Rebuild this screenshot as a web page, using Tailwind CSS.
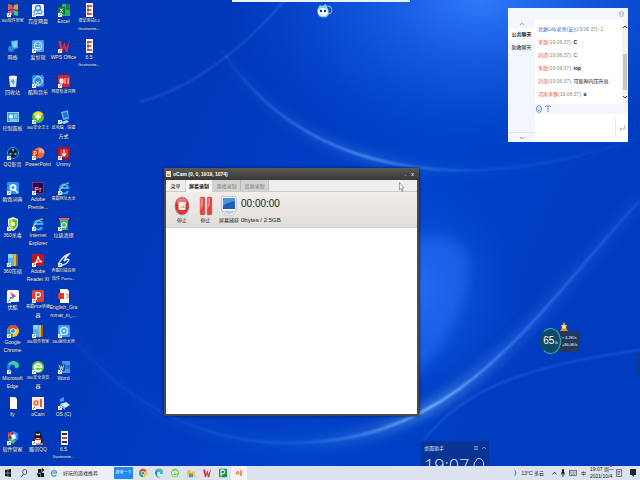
<!DOCTYPE html>
<html lang="en">

<head>
    <meta charset="UTF-8">
    <meta name="viewport" content="width=device-width, initial-scale=1.0">
    <title>Desktop</title>
    <script src="https://cdn.jsdelivr.net/npm/@tailwindcss/browser@4"></script>
</head>

<body onload="loadIcons()" class="h-screen flex flex-col overflow-hidden bg-[#0038b8] font-['Liberation_Sans','Noto_Sans_CJK_SC',sans-serif]">
    <main class="relative flex-1 min-h-0 overflow-hidden">
        <!-- Wallpaper -->
        <svg class="absolute inset-0 w-full h-full" viewBox="0 0 640 466" preserveAspectRatio="none" aria-hidden="true">
            <defs>
                <linearGradient id="base" x1="0" y1="0" x2="1" y2="0.3">
                    <stop offset="0" stop-color="#0038b4" />
                    <stop offset="0.35" stop-color="#0038bc" />
                    <stop offset="0.7" stop-color="#0042c8" />
                    <stop offset="1" stop-color="#003cc0" />
                </linearGradient>
                <radialGradient id="glowTop">
                    <stop offset="0" stop-color="#3580ff" stop-opacity="0.9" />
                    <stop offset="1" stop-color="#1058e0" stop-opacity="0" />
                </radialGradient>
                <linearGradient id="arcA" x1="0" x2="1">
                    <stop offset="0" stop-color="#5a9cff" stop-opacity="0.1" />
                    <stop offset="0.35" stop-color="#64a8ff" stop-opacity="0.9" />
                    <stop offset="0.6" stop-color="#3c80f8" stop-opacity="0.3" />
                    <stop offset="1" stop-color="#2a70f0" stop-opacity="0.1" />
                </linearGradient>
                <linearGradient id="arcB" x1="0" x2="1">
                    <stop offset="0" stop-color="#2a70f0" stop-opacity="0.1" />
                    <stop offset="0.4" stop-color="#3a80f4" stop-opacity="0.4" />
                    <stop offset="0.63" stop-color="#8cc8ff" stop-opacity="1" />
                    <stop offset="0.78" stop-color="#4c90ff" stop-opacity="0.7" />
                    <stop offset="1" stop-color="#2a70f0" stop-opacity="0.4" />
                </linearGradient>
                <filter id="soft1" x="-20%" y="-20%" width="140%" height="140%"><feGaussianBlur stdDeviation="1" /></filter>
                <filter id="soft6" x="-20%" y="-20%" width="140%" height="140%"><feGaussianBlur stdDeviation="6" /></filter>
            </defs>
            <rect width="640" height="466" fill="url(#base)" />
            <ellipse cx="480" cy="0" rx="250" ry="150" fill="url(#glowTop)" />
            <ellipse cx="415" cy="290" rx="110" ry="120" fill="url(#glowTop)" opacity="0.6" />
            <path d="M410 238H450Q474 250 468 280Q458 340 410 380Z" fill="#2a78f8" opacity="0.45" filter="url(#soft6)" />
            <path d="M140 102C190 88 240 52 285 0" fill="none" stroke="#3a7cf0" stroke-width="2" opacity="0.4" filter="url(#soft1)" />
            <path d="M222 50C260 110 330 165 450 170C540 172 600 150 640 138" fill="none" stroke="url(#arcA)" stroke-width="7" opacity="0.4" filter="url(#soft6)" />
            <path d="M222 50C260 110 330 165 450 170C540 172 600 150 640 138" fill="none" stroke="url(#arcA)" stroke-width="2" filter="url(#soft1)" />
            <path d="M70 335C130 410 210 443 290 443C460 443 530 320 640 200" fill="none" stroke="url(#arcB)" stroke-width="10" opacity="0.5" filter="url(#soft6)" />
            <path d="M70 335C130 410 210 443 290 443C460 443 530 320 640 200" fill="none" stroke="url(#arcB)" stroke-width="2" filter="url(#soft1)" />
            <path d="M424 440C460 395 510 368 640 350" fill="none" stroke="#3c84fa" stroke-width="2" opacity="0.35" filter="url(#soft1)" />
        </svg>

        <!-- Desktop icons -->
        <div id="iconGrid" class="relative grid grid-flow-col grid-rows-13 grid-cols-[25px_26px_25px_26px] h-full w-max pt-[2px]"></div>

        <!-- Docked bar and mascot -->
        <div class="absolute top-0 left-[232px] right-[230px] h-[2px] bg-[#e8f2fc]"></div>
        <svg class="absolute top-[3px] left-1/2 w-4 h-4 -ml-1" viewBox="0 0 16 16">
            <circle cx="12" cy="7" r="4" fill="none" stroke="#b8c878" />
            <path d="M2 5L4 2L6 3L10 1L11 4Q14 8 12 13Q8 16 3 13Q0 9 2 5Z" fill="#7fd0f4" />
            <ellipse cx="7" cy="9" rx="5" ry="4" fill="#f2fbff" />
            <circle cx="5" cy="8" r="1.2" fill="#17345e" /><circle cx="9" cy="8" r="1.2" fill="#17345e" />
            <path d="M6 11H8L7 12Z" fill="#f09a30" />
        </svg>
        <div class="absolute right-0 top-[352px] w-[2px] h-6 bg-[#123a86]"></div>

        <!-- oCam window -->
        <section class="absolute left-[164px] top-[168px] w-[255px] h-[248px] flex flex-col border-2 border-t-0 border-[#4a4a48] bg-white shadow-[0_0_3px_#001a60]">
            <header class="flex items-center h-3 -mx-[2px] pl-[2px] pr-1 gap-[2px] bg-linear-to-b from-[#5c5a56] to-[#383734] text-white text-[6px] leading-3">
                <svg class="w-[5px] h-[6px]" viewBox="0 0 5 6"><rect width="5" height="6" fill="#f5e6d4" /><path d="M1 3H4V5H1Z" fill="#e98c48" /></svg>
                <h1 class="flex-1 text-[5px] font-bold">oCam (0, 0, 1919, 1074)</h1>
                <button aria-label="Minimize" class="w-[5px]">.</button>
                <button aria-label="Close" class="w-[5px]">x</button>
            </header>
            <nav class="flex h-3 border-b border-[#cfccc8] bg-[#efeeec] text-[5px] leading-3 text-[#222]">
                <button class="w-[19px]">菜单</button>
                <button class="w-7 h-3 bg-[#f8f7f5] border-x border-[#d4d1cd] font-bold">屏幕录制</button>
                <button class="w-7 bg-[#d5d3d1] border-r border-[#bdbab7] text-[#777]">游戏录制</button>
                <button class="w-7 bg-[#d5d3d1] border-r border-[#c7c4c1] text-[#777]">音频录制</button>
            </nav>
            <div class="flex h-9 pt-1 pl-1 bg-linear-to-b from-[#f1eeea] to-[#dfdcda] border-b border-[#d6d3d0] text-[5px] leading-[6px] text-[#222]">
                <button class="w-6 flex flex-col items-center gap-[1px]">
                    <svg class="w-4 h-5" viewBox="0 0 16 20">
                        <ellipse cx="8" cy="10" rx="7.5" ry="9.5" fill="#a9a9a9" /><ellipse cx="8" cy="10" rx="6.8" ry="8.6" fill="#d93432" />
                        <ellipse cx="8" cy="6" rx="5" ry="4" fill="#ee7770" /><rect x="4.500" y="6" width="7" height="8" rx="1" fill="#f6f1e9" /><path d="M6 12L10 9L11 12Z" fill="#c8c0b4" />
                    </svg>停止
                </button>
                <button class="w-[23px] flex flex-col items-center gap-[1px]">
                    <svg class="w-4 h-5" viewBox="0 0 16 20">
                        <rect x="2" y="1" width="5" height="18" rx="1" fill="#de4441" stroke="#c98b86" stroke-width=".5" /><rect x="9" y="1" width="5" height="18" rx="1" fill="#de4441" stroke="#c98b86" stroke-width=".5" />
                        <path d="M2.500 2H5V10L2.500 14ZM9.500 2H12V9L9.500 13Z" fill="#f0817c" />
                    </svg>停止
                </button>
                <button class="w-6 flex flex-col items-center gap-[1px] whitespace-nowrap">
                    <svg class="w-4 h-5" viewBox="0 0 16 20">
                        <ellipse cx="8" cy="18" rx="5" ry="1.800" fill="#e9eef4" stroke="#9aa" stroke-width=".4" /><path d="M6 15H10V18H6Z" fill="#ccd" />
                        <rect x=".5" y=".5" width="15" height="15" rx="1" fill="#eef3f8" stroke="#8fa3b8" stroke-width=".5" /><rect x="2" y="2" width="12" height="11" fill="#1f5fb6" /><path d="M2 2H14V5Q7 6 2 10Z" fill="#4f93de" />
                    </svg>屏幕捕获
                </button>
                <div class="flex flex-col gap-[2px] text-[#222]">
                    <p class="text-[10px] leading-4">00:00:00</p>
                    <p class="text-[6px] leading-3">0bytes / 2.5GB</p>
                </div>
            </div>
        </section>
        <svg class="absolute left-[399px] top-[182px] w-[5px] h-[10px]" viewBox="0 0 5 10"><path d="M.5 .5V8L2 6.500L3 9.500L4 9L3 6H4.800Z" fill="#fff" stroke="#555" stroke-width=".5" /></svg>

        <!-- Chat panel -->
        <section class="absolute right-3 top-2 w-[120px] h-[134px] flex flex-col bg-white text-[5px]">
            <header class="flex justify-end items-center h-3 px-1 bg-[#f3f6fc]">
                <svg class="w-[5px] h-[6px]" viewBox="0 0 5 6" fill="none" stroke="#8890b0" stroke-width=".6"><rect x=".5" y=".5" width="4" height="5" rx="2" /><path d="M1 3H4" /></svg>
            </header>
            <div class="flex flex-1 min-h-0">
                <nav class="flex flex-col w-[27px] bg-[#f3f6fc] text-[#222]">
                    <button aria-label="Up" class="h-2 flex justify-center items-center"><svg class="w-1 h-1" viewBox="0 0 4 4"><path d="M0 3L2 1L4 3" fill="none" stroke="#666" stroke-width=".6" /></svg></button>
                    <button class="h-[13px] leading-[13px] bg-white font-bold whitespace-nowrap">公共聊天</button>
                    <button class="h-[13px] leading-[13px] whitespace-nowrap">助教聊天</button>
                    <button aria-label="Down" class="mt-auto h-[10px] flex justify-center items-center border-t border-[#e0e5f0]"><svg class="w-1 h-1" viewBox="0 0 4 4"><path d="M0 1L2 3L4 1" fill="none" stroke="#4a6fc0" stroke-width=".6" /></svg></button>
                </nav>
                <div class="flex-1 flex flex-col min-w-0">
                    <div class="flex h-[84px]">
                        <ul class="flex-1 pt-[3px] pl-[3px] leading-[13px] text-[#888] whitespace-nowrap overflow-hidden">
                            <li class="h-[13px]"><span class="text-[#3a6cc0]">北爵Lilly老师(友)</span>(19:06:37): 1</li>
                            <li class="h-[13px]"><span class="text-[#e8502c]">李歆</span>(19:06:37): <b class="text-[#111]">C</b></li>
                            <li class="h-[13px]"><span class="text-[#e8502c]">刘泽</span>(19:06:37): <span class="text-[#444]">C</span></li>
                            <li class="h-[13px]"><span class="text-[#e8502c]">李歆</span>(19:06:37): <b class="text-[#111]">iop</b></li>
                            <li class="h-[13px]"><span class="text-[#e8502c]">刘泽</span>(19:06:37): <span class="text-[#111]">可能神内压升高</span></li>
                            <li class="h-[13px]"><span class="text-[#e8502c]">河南李静</span>(19:06:37): <b class="text-[#111]">a</b></li>
                        </ul>
                        <div class="w-[6px] flex flex-col items-center justify-between py-[5px] bg-[#f4f4f4]">
                            <svg class="w-1 h-1" viewBox="0 0 4 4"><path d="M0 3L2 1L4 3" fill="none" stroke="#222" stroke-width=".9" /></svg>
                            <div class="w-1 h-9 mt-5 bg-[#c6c6c6]"></div>
                            <svg class="w-1 h-1" viewBox="0 0 4 4"><path d="M0 1L2 3L4 1" fill="none" stroke="#222" stroke-width=".9" /></svg>
                        </div>
                    </div>
                    <div class="flex items-center gap-[3px] h-[10px] pl-[1px] bg-[#f3f6fc]">
                        <button aria-label="Emoji"><svg class="w-[6px] h-2" viewBox="0 0 6 8" fill="none" stroke="#4a72e8" stroke-width=".7"><ellipse cx="3" cy="4" rx="2.600" ry="3.400" /><path d="M1.500 4.500Q3 7 4.500 4.500M2 2.500V3.200M4 2.500V3.200" /></svg></button>
                        <button aria-label="Text"><svg class="w-[6px] h-2" viewBox="0 0 6 8" fill="none" stroke="#4a72e8" stroke-width=".8"><path d="M.5 2V1H5.500V2M3 1V7" /></svg></button>
                    </div>
                    <form class="flex flex-1 items-center py-1">
                        <input aria-label="Message" class="flex-1 min-w-0 h-full outline-none">
                        <button aria-label="Send" class="w-[13px] h-full flex justify-center items-center border-l border-[#e4e8f0]"><svg class="w-[6px] h-[6px]" viewBox="0 0 6 6"><path d="M5.500 .5V4H1M2.500 2.500L1 4L2.500 5.500" fill="none" stroke="#999" stroke-width=".7" /></svg></button>
                    </form>
                </div>
            </div>
        </section>

        <!-- Speed ball -->
        <div class="absolute right-[60px] top-[322px] w-10 text-white">
            <svg class="absolute right-3 top-0 z-10 w-2 h-[10px]" viewBox="0 0 8 10"><path d="M4 0L5.500 3H7L6 6L8 9H0L2 6L1 3H2.500Z" fill="#f6b02c" /><circle cx="4" cy="5" r="1.500" fill="#fff0c0" /><path d="M1 8H7" stroke="#e46a20" /></svg>
            <div class="flex items-center pt-[6px]">
                <div class="relative z-10 shrink-0 w-[21px] h-[26px] rounded-[50%] border border-[#22b8b0] border-l-[#1d4a68] bg-[#124a66] text-center text-[10px] leading-6">65<span class="text-[4px]">%</span></div>
                <div class="-ml-[6px] pl-[7px] w-[25px] h-[21px] rounded-[6px] bg-[#22385e] text-[4px] leading-[7px] py-[3px] whitespace-nowrap">
                    <p><span class="text-[#3cb4f0]">▾</span> 4.2K/s</p>
                    <p><span class="text-[#f09c3c]">▴</span>36.0K/s</p>
                </div>
            </div>
        </div>

        <!-- Clock widget, runs on below the taskbar -->
        <section class="absolute left-[421px] top-[441px] w-[68px] h-[50px] px-[3px] bg-[#0a3290]/90 text-[#dce8ff]">
            <div class="flex items-center gap-1 h-[14px] text-[5px] leading-[14px]">
                <h2 class="flex-1">桌面助手</h2>
                <svg class="w-1 h-1" viewBox="0 0 4 4"><path d="M0 .5H4M0 2H4M0 3.500H4" stroke="#aac4f4" stroke-width=".6" /></svg>
                <svg class="w-1 h-1" viewBox="0 0 4 4"><path d="M0 3L2 1L4 3" fill="none" stroke="#aac4f4" stroke-width=".6" /></svg>
            </div>
            <div class="flex gap-1">
                <p class="text-[18px] leading-5 font-['Open_Sans'] font-light">19:07</p>
                <svg class="w-3 h-4" viewBox="0 0 12 16"><path d="M3 14Q-1 9 3 6Q4 2 8 4Q12 6 10 14Z" fill="none" stroke="#cfe0ff" /></svg>
            </div>
        </section>
    </main>

    <!-- Taskbar -->
    <footer class="relative flex items-center h-[14px] bg-[#dce3ef] text-[6px] leading-[7px] text-[#222]">
        <button aria-label="Start" class="w-4 flex justify-center"><svg class="w-[6px] h-2" viewBox="0 0 6 8"><path d="M0 1L2.700 .5V3.700H0ZM3.200 .4L6 0V3.700H3.200ZM0 4.300H2.700V7.500L0 7ZM3.200 4.300H6V8L3.200 7.600Z" fill="#111" /></svg></button>
        <button aria-label="Search" class="w-4 flex justify-center"><svg class="w-[6px] h-2" viewBox="0 0 6 8"><ellipse cx="3.700" cy="3" rx="2" ry="2.600" fill="none" stroke="#333" stroke-width=".7" /><path d="M2.500 5L.3 8" stroke="#333" stroke-width=".8" /></svg></button>
        <button aria-label="Apps" class="w-[18px] flex justify-center"><svg class="w-2 h-[10px]" viewBox="0 0 8 10"><path d="M1 1H4V4H1ZM5 0L7.500 2L5 4ZM0 5L3 6V9H1ZM4 5H7V9H4Z" fill="#111" /><path d="M1 4.500L7 5.500M4 1V9" stroke="#111" /></svg></button>
        <form class="flex items-center w-[83px] h-[14px] bg-[#eceff4]">
            <svg class="w-2 h-2 shrink-0" viewBox="0 0 12 14"><path d="M10 10A4.500 5 0 1 1 10.500 7H3" fill="none" stroke="#1e90e8" stroke-width="2" /><path d="M1 12Q3 4 11 2" fill="none" stroke="#f0b83c" /></svg>
            <input aria-label="Search the web" value="· 好玩的游戏推荐" class="flex-1 min-w-0 pl-[2px] text-[5px] outline-none">
            <button class="w-[19px] h-3 bg-[#2488f4] text-white text-[4px] leading-3 whitespace-nowrap">搜索一下</button>
        </form>
        <div id="pinned" class="flex h-full pl-[2px]"></div>
        <div class="flex-1"></div>
        <div class="flex items-center gap-1 pr-1">
            <svg class="w-1 h-2" viewBox="0 0 4 8"><path d="M1 0Q6 4 1 8Q3 4 1 0Z" fill="#3c9cf0" /></svg>
            <button class="whitespace-nowrap pr-1 text-[5px]">13°C 多云</button>
            <svg class="w-[5px] h-1" viewBox="0 0 5 4"><path d="M.5 3.500L2.500 1L4.500 3.500" fill="none" stroke="#222" stroke-width=".7" /></svg>
            <svg class="w-1 h-2" viewBox="0 0 4 8"><rect x="1" width="2" height="5" rx="1" fill="#111" /><path d="M0 3Q0 6 2 6Q4 6 4 3M2 6V8" fill="none" stroke="#111" stroke-width=".7" /></svg>
            <svg class="w-2 h-[6px]" viewBox="0 0 8 6"><rect x=".4" y=".4" width="7.200" height="5.200" fill="none" stroke="#333" stroke-width=".6" /><path d="M1 2H7M1 3.200H7M2 4.500H6" stroke="#333" stroke-width=".5" stroke-dasharray="1 .5" /></svg>
            <span class="text-[5px]">中</span>
            <div class="relative w-[22px] text-center text-[5px] leading-[7px] whitespace-nowrap">
                <p>19:07 周一</p>
                <p>2021/10/4</p>
                <i class="absolute right-0 -top-[1px] w-[2px] h-[2px] rounded-full bg-[#e02030]"></i>
            </div>
            <svg class="w-[6px] h-2" viewBox="0 0 6 8"><path d="M.5 .5H5.500V7.500H.5ZM1.500 2.500H4.500M1.500 4H4.500M1.500 5.500H3.500" fill="none" stroke="#333" stroke-width=".6" /></svg>
            <svg class="ml-1 w-[6px] h-2" viewBox="0 0 6 8"><path d="M0 0H6V6H4V8L2 6H0Z" fill="#222" /></svg>
        </div>
    </footer>

    <script>
        // each drawing sits in a 12x14 box
        const tile = (color) => `<rect y="1" width="12" height="12" rx="1.500" fill="${color}"/>`;
        const letter = (s, color, size) => `<text x="6" y="10.500" text-anchor="middle" font-size="${size || 9}" font-weight="bold" fill="${color}">${s}</text>`;
        const zip = '<rect x="1" y="1" width="10" height="12" fill="#58b4e8"/><path d="M1 1H6V5H1Z" fill="#8cd4f4"/><path d="M7 1H9V13H7Z" fill="#f0b428"/><path d="M9 1H11V13H9Z" fill="#8a6428"/>';
        const ie = (color) => `<path d="M10 10A4.200 4.500 0 1 1 10.300 7H3" fill="none" stroke="${color}" stroke-width="2"/><path d="M1 13Q0 9 5 5Q9 1 11 2" fill="none" stroke="#f0d060"/>`;
        const art = {
            petals: '<path d="M1 1L5 2L6 6L1 7Z" fill="#f05848"/><path d="M11 1L7 2L6 6L11 7Z" fill="#f09838"/><path d="M1 13L1 8L6 7L5 12Z" fill="#e848a0"/><path d="M11 13V8L6 7L7 12Z" fill="#48c468"/>',
            baidu: tile('#f4f8ff') + '<circle cx="6" cy="5" r="2.500" fill="none" stroke="#2e7df0" stroke-width="1.300"/><path d="M2 9Q3 6 6 8Q9 6 10 9Q9 12 6 10Q3 12 2 9Z" fill="none" stroke="#3c88f4" stroke-width="1.200"/>',
            excel: '<rect x="4" y="1" width="8" height="12" fill="#2fae68"/><path d="M8 1H12V7H8Z" fill="#1a8048"/><rect y="4" width="7" height="7" fill="#0f6c3c"/><path d="M2 5.500L5 9.500M5 5.500L2 9.500" stroke="#fff"/>',
            doc: '<rect x="3" width="7" height="14" fill="#f8f4f2"/><path d="M4 3H9M4 7H8M4 11H9" stroke="#c02828" stroke-width="1.500"/><path d="M5 2V12" stroke="#444" stroke-width=".7"/>',
            net: '<path d="M4 2L11 1V9L5 11Z" fill="#3ca0e4"/><path d="M5 3L10 2V8L6 9Z" fill="#7cd0f8"/><ellipse cx="4" cy="10" rx="3" ry="3" fill="#2c88d0"/>',
            face: tile('#4aa0f4') + '<rect x="2.500" y="3" width="7" height="8" rx="3" fill="none" stroke="#e0f0ff"/><path d="M4 8Q6 10 8 8M4.500 5V6M7.500 5V6" fill="none" stroke="#fff"/>',
            wps: '<path d="M0 2H3L4.500 9L6 4H7L8 9L12 1L9.500 13H7.500L6 8L4.500 13H3Z" fill="#d8302c"/>',
            bin: '<path d="M2 3L10 3L9 13H3Z" fill="#dce8f0"/><ellipse cx="6" cy="3" rx="4" ry="1.500" fill="#f8fcff"/><path d="M4 7L6 5L8 8L6 10Z" fill="#5894d8"/>',
            kugou: tile('#2488f0') + '<circle cx="6" cy="7" r="4.300" fill="none" stroke="#fff"/>' + letter('K', '#fff', 6),
            dict: tile('#e81c28') + '<path d="M2 5H5V9H2ZM7 4V10M9 5H11M9 7H11M9 9H11" fill="#fff" stroke="#fff"/>',
            panel: '<rect y="2" width="12" height="10" fill="#8cd0fc"/><rect x="1" y="3" width="10" height="8" fill="#38a0ec"/><circle cx="4" cy="6.500" r="2" fill="#fff"/><path d="M7 5H10M7 7H10M3 10H10" stroke="#fff" stroke-width=".8"/>',
            guard: '<circle cx="6" cy="7" r="6" fill="#58c030"/><path d="M1 4Q6 -1 11 4L6 9Z" fill="#f4e028"/><path d="M6 4V10M3 7H9" stroke="#fff" stroke-width="2"/>',
            pc: '<path d="M3 2L10 0L11 9L5 10Z" fill="#58b0ec"/><path d="M5 3L9 2L10 7L6 8Z" fill="#2870c0"/><path d="M3 12L9 10L11 12L6 14Z" fill="#b0d8f4"/>',
            film: '<circle cx="6" cy="7" r="5.500" fill="#101e38" stroke="#28a8f0"/><circle cx="6" cy="4" r="1.200" fill="#30b8f8"/><circle cx="3.500" cy="8" r="1.200" fill="#30b8f8"/><circle cx="8.500" cy="8" r="1.200" fill="#30b8f8"/>',
            ppt: '<circle cx="7" cy="7" r="5.500" fill="#e8683c"/><path d="M7 1.500A5.500 5.500 0 0 1 12.500 7H7Z" fill="#f8a080"/><rect y="4" width="6" height="7" fill="#c03c1c"/><path d="M2 10V5.500H4Q5 7 4 8H2" fill="none" stroke="#fff" stroke-width=".8"/>',
            ummy: tile('#a81424') + '<rect x="2" y="3" width="8" height="8" fill="#d83444"/><path d="M6 4V9M4 7.500L6 10L8 7.500" stroke="#fff" stroke-width="1.200" fill="none"/>',
            magnify: tile('#2890f0') + '<circle cx="6" cy="6.500" r="3.500" fill="#f0f8ff"/><circle cx="6" cy="6.500" r="1.500" fill="#2890f0"/><path d="M8 9L11 12" stroke="#fff" stroke-width="1.500"/>',
            pr: tile('#2c0a38') + '<rect x=".5" y="1.500" width="11" height="11" fill="none" stroke="#a850c8" stroke-width=".6"/>' + letter('Pr', '#e488f8', 7),
            ie: ie('#30b0f4'),
            shield: '<path d="M6 0L11 2V8Q10 12 6 14Q2 12 1 8V2Z" fill="#e8f4d0"/><path d="M6 2L10 3V8Q9 11 6 12.500Z" fill="#68b820"/><path d="M6 2L2 3V8Q3 11 6 12.500Z" fill="#a8dc48"/><circle cx="6" cy="7" r="2" fill="#fff"/>',
            trash: '<path d="M2 3H10L9.500 13H2.500Z" fill="#48b468"/><path d="M1 1H11V3H1Z" fill="#e86060"/><circle cx="6" cy="8" r="2.500" fill="none" stroke="#fff"/>',
            zip: zip,
            adobe: tile('#c01818') + '<path d="M2 11Q6 8 6 3Q7 8 10 9Q6 8 2 11Z" fill="none" stroke="#fff" stroke-width="1.200"/>',
            pantum: '<path d="M1 10Q6 2 11 1Q7 5 6 8Q9 5 11 7Q8 12 4 12Z" fill="none" stroke="#d4ecfc" stroke-width="1.400"/>',
            youku: tile('#fff') + '<path d="M3 3L9 7L6 9Z" fill="#f02880"/><path d="M9 7L3 11V8Z" fill="#28a0f0"/>',
            pdf: tile('#e84038') + letter('P', '#fff', 10),
            pptdoc: '<path d="M2 0H9L11 2V14H2Z" fill="#fff"/><rect y="4" width="6" height="6" fill="#d84030"/><path d="M8 5H10V9H8" stroke="#e87060" fill="none"/>',
            chrome: '<circle cx="6" cy="7" r="6" fill="#f4c430"/><path d="M6 7L.8 4A6 6 0 0 1 11.200 4Z" fill="#e04434"/><path d="M6 7L.8 4A6 6 0 0 0 6 13Z" fill="#38a854"/><circle cx="6" cy="7" r="2.800" fill="#fff"/><circle cx="6" cy="7" r="2.100" fill="#4488f0"/>',
            driver: tile('#38a0f8') + '<circle cx="6" cy="7" r="3.500" fill="none" stroke="#fff" stroke-width="1.200"/><circle cx="6" cy="7" r="1.200" fill="#fff"/>',
            edge: '<path d="M0 8Q0 1 6 1Q12 1 12 6Q11 9 8 8Q8 4 5 5Q2 6 3 10Q4 13 8 13Q2 14 0 8Z" fill="#1c88d8"/><path d="M1 5Q3 1 7 1Q12 2 12 6Q11 9 8 8Q8 3 1 5Z" fill="#40c8a0"/>',
            green: '<circle cx="6" cy="7" r="6" fill="#70cc40"/><path d="M9 9.500A3.500 3.500 0 1 1 9.500 7H3" fill="none" stroke="#fff" stroke-width="1.500"/>',
            word: '<rect x="4" y="1" width="8" height="12" fill="#4498e8"/><path d="M4 5H12V9H4Z" fill="#2870c8"/><rect y="4" width="7" height="7" fill="#1850a4"/><path d="M1.500 5.500L2.500 9.500L3.500 6.500L4.500 9.500L5.500 5.500" stroke="#fff" stroke-width=".7" fill="none"/>',
            page: '<path d="M3 1H8L10 3V13H3Z" fill="#fcfcf4"/><path d="M8 1V3H10" fill="#ccc"/>',
            ocam: '<rect y="1" width="12" height="12" fill="#fbece0"/><circle cx="4" cy="7" r="2" fill="none" stroke="#e06030" stroke-width="1.400"/><path d="M9 3V11" stroke="#e04c20" stroke-width="1.800"/>',
            drive: '<path d="M2 8L8 6L12 9L7 12Z" fill="#d8e8f4"/><path d="M2 8L7 12V14L2 10Z" fill="#90a8c0"/><path d="M2 3L6 1V5L2 6Z" fill="#30a8f0"/>',
            manager: '<path d="M6 0L11 2V8L6 13Z" fill="#2c8cf0"/><path d="M6 0L1 2V7L4 5Z" fill="#f04c3c"/><path d="M1 7Q2 11 6 13L8 9Z" fill="#48c850"/><path d="M4 4L8 3L9 7L5 9Z" fill="#fff"/>',
            qq: '<ellipse cx="6" cy="5" rx="3.500" ry="5" fill="#111"/><ellipse cx="6" cy="9" rx="5" ry="4" fill="#111"/><ellipse cx="6" cy="10" rx="3" ry="3" fill="#fff"/><path d="M2 7Q6 9 10 7V8.500Q6 10 2 8.500Z" fill="#e02020"/><circle cx="4.800" cy="3.500" r="1" fill="#fff"/><circle cx="7.200" cy="3.500" r="1" fill="#fff"/><path d="M1 13H11" stroke="#f0a020" stroke-width="1.500"/>',
            book: '<rect x="3" width="7" height="14" fill="#f4f4f0"/><path d="M4 2H9V4H4ZM4 10H9V12H4Z" fill="#333"/><path d="M4 6H9V8H4Z" fill="#c04040"/>',
            folder: '<path d="M0 3H5L6 5H12V13H0Z" fill="#f4c444"/><path d="M3 8H9V13H3Z" fill="#4898e0"/>',
            play: tile('#189048') + '<path d="M3 12V3H7Q10 5 7 8H3" fill="none" stroke="#fff" stroke-width="1.600"/>'
        };
        const arrow = '<path d="M0 10H4V14H0Z" fill="#fff"/><path d="M1 13L3 11M1.500 11H3V12.500" fill="none" stroke="#2464c0" stroke-width=".6"/>';

        // columns from left to right, 13 rows each
        const desktopItems = [
            ['petals', '360软件管家'], ['net', '网络'], ['bin', '回收站'], ['panel', '控制面板'], ['film', 'QQ影音'], ['magnify', '欧路词典'],
            ['shield', '360杀毒'], ['zip', '360压缩'], ['youku', '优酷'], ['chrome', 'Google<br>Chrome'], ['edge', 'Microsoft<br>Edge'], ['page', 'lly'], ['manager', '软件管家'],
            ['baidu', '百度网盘'], ['face', '爱剪辑'], ['kugou', '酷狗音乐'], ['guard', '360安全卫士'], ['ppt', 'PowerPoint'], ['pr', 'Adobe<br>Premie...'],
            ['ie', 'Internet<br>Explorer'], ['adobe', 'Adobe<br>Reader XI'], ['pdf', '毒霸PDF转换<br>器'], ['zip', '360软件管家'], ['green', '360安全浏览<br>器'], ['ocam', 'oCam'], ['qq', '腾讯QQ'],
            ['excel', 'Excel'], ['wps', 'WPS Office'], ['dict', '网易有道词典'], ['pc', '此电脑 - 快捷<br>方式'], ['ummy', 'Ummy'], ['ie', '毒霸网址大全'],
            ['trash', '垃圾清理'], ['pantum', '奔图扫描应用<br>软件 Pantu...'], ['pptdoc', 'English_Gra<br>mmar_in_...'], ['driver', '360驱动大师'], ['word', 'Word'], ['drive', 'OS (C)'], ['book', '6.5<br>Gastrointe...'],
            ['doc', '课堂测试6.5<br>Gastrointe...'], ['doc', '6.5<br>Gastrointe...']
        ];
        const noArrow = ['net', 'bin', 'panel', 'page', 'doc', 'book', 'pptdoc'];
        const pinnedItems = ['chrome', 'edge', 'green', 'folder', 'wps', 'play', 'ocam'];

        // rough width of a line at 5px, Chinese characters are square
        function lineWidth(line) {
            let wide = (line.match(/[\u4e00-\u9fff]/g) || []).length;
            return wide * 5 + (line.length - wide) * 2;
        }

        function loadIcons() {
            let grid = document.getElementById("iconGrid");
            desktopItems.forEach(([icon, label]) => {
                let item = document.createElement("button");
                item.className = "flex flex-col items-center pt-[1px] min-h-0 text-white leading-[8px] whitespace-nowrap text-shadow-[0_0_1px_#000]";
                let lines = label.split("<br>").map(line => {
                    let size = lineWidth(line) > 25 ? "text-[4px]" : "text-[5px]";
                    return `<span class="${size} h-2">${line}</span>`;
                });
                item.innerHTML = `
                    <svg class="w-3 h-[14px] shrink-0 overflow-visible" viewBox="0 0 12 14">${art[icon]}${noArrow.includes(icon) ? "" : arrow}</svg>
                    ${lines.join("")}
                `;
                grid.appendChild(item);
            });

            let pinned = document.getElementById("pinned");
            pinnedItems.forEach((icon) => {
                let item = document.createElement("button");
                item.setAttribute("aria-label", icon);
                item.className = "w-4 h-full flex items-center justify-center last:bg-[#f4f5f8]";
                item.innerHTML = `<svg class="w-2 h-[10px]" viewBox="0 0 12 14" preserveAspectRatio="none">${art[icon]}</svg>`;
                pinned.appendChild(item);
            });
        }
    </script>
</body>

</html>
